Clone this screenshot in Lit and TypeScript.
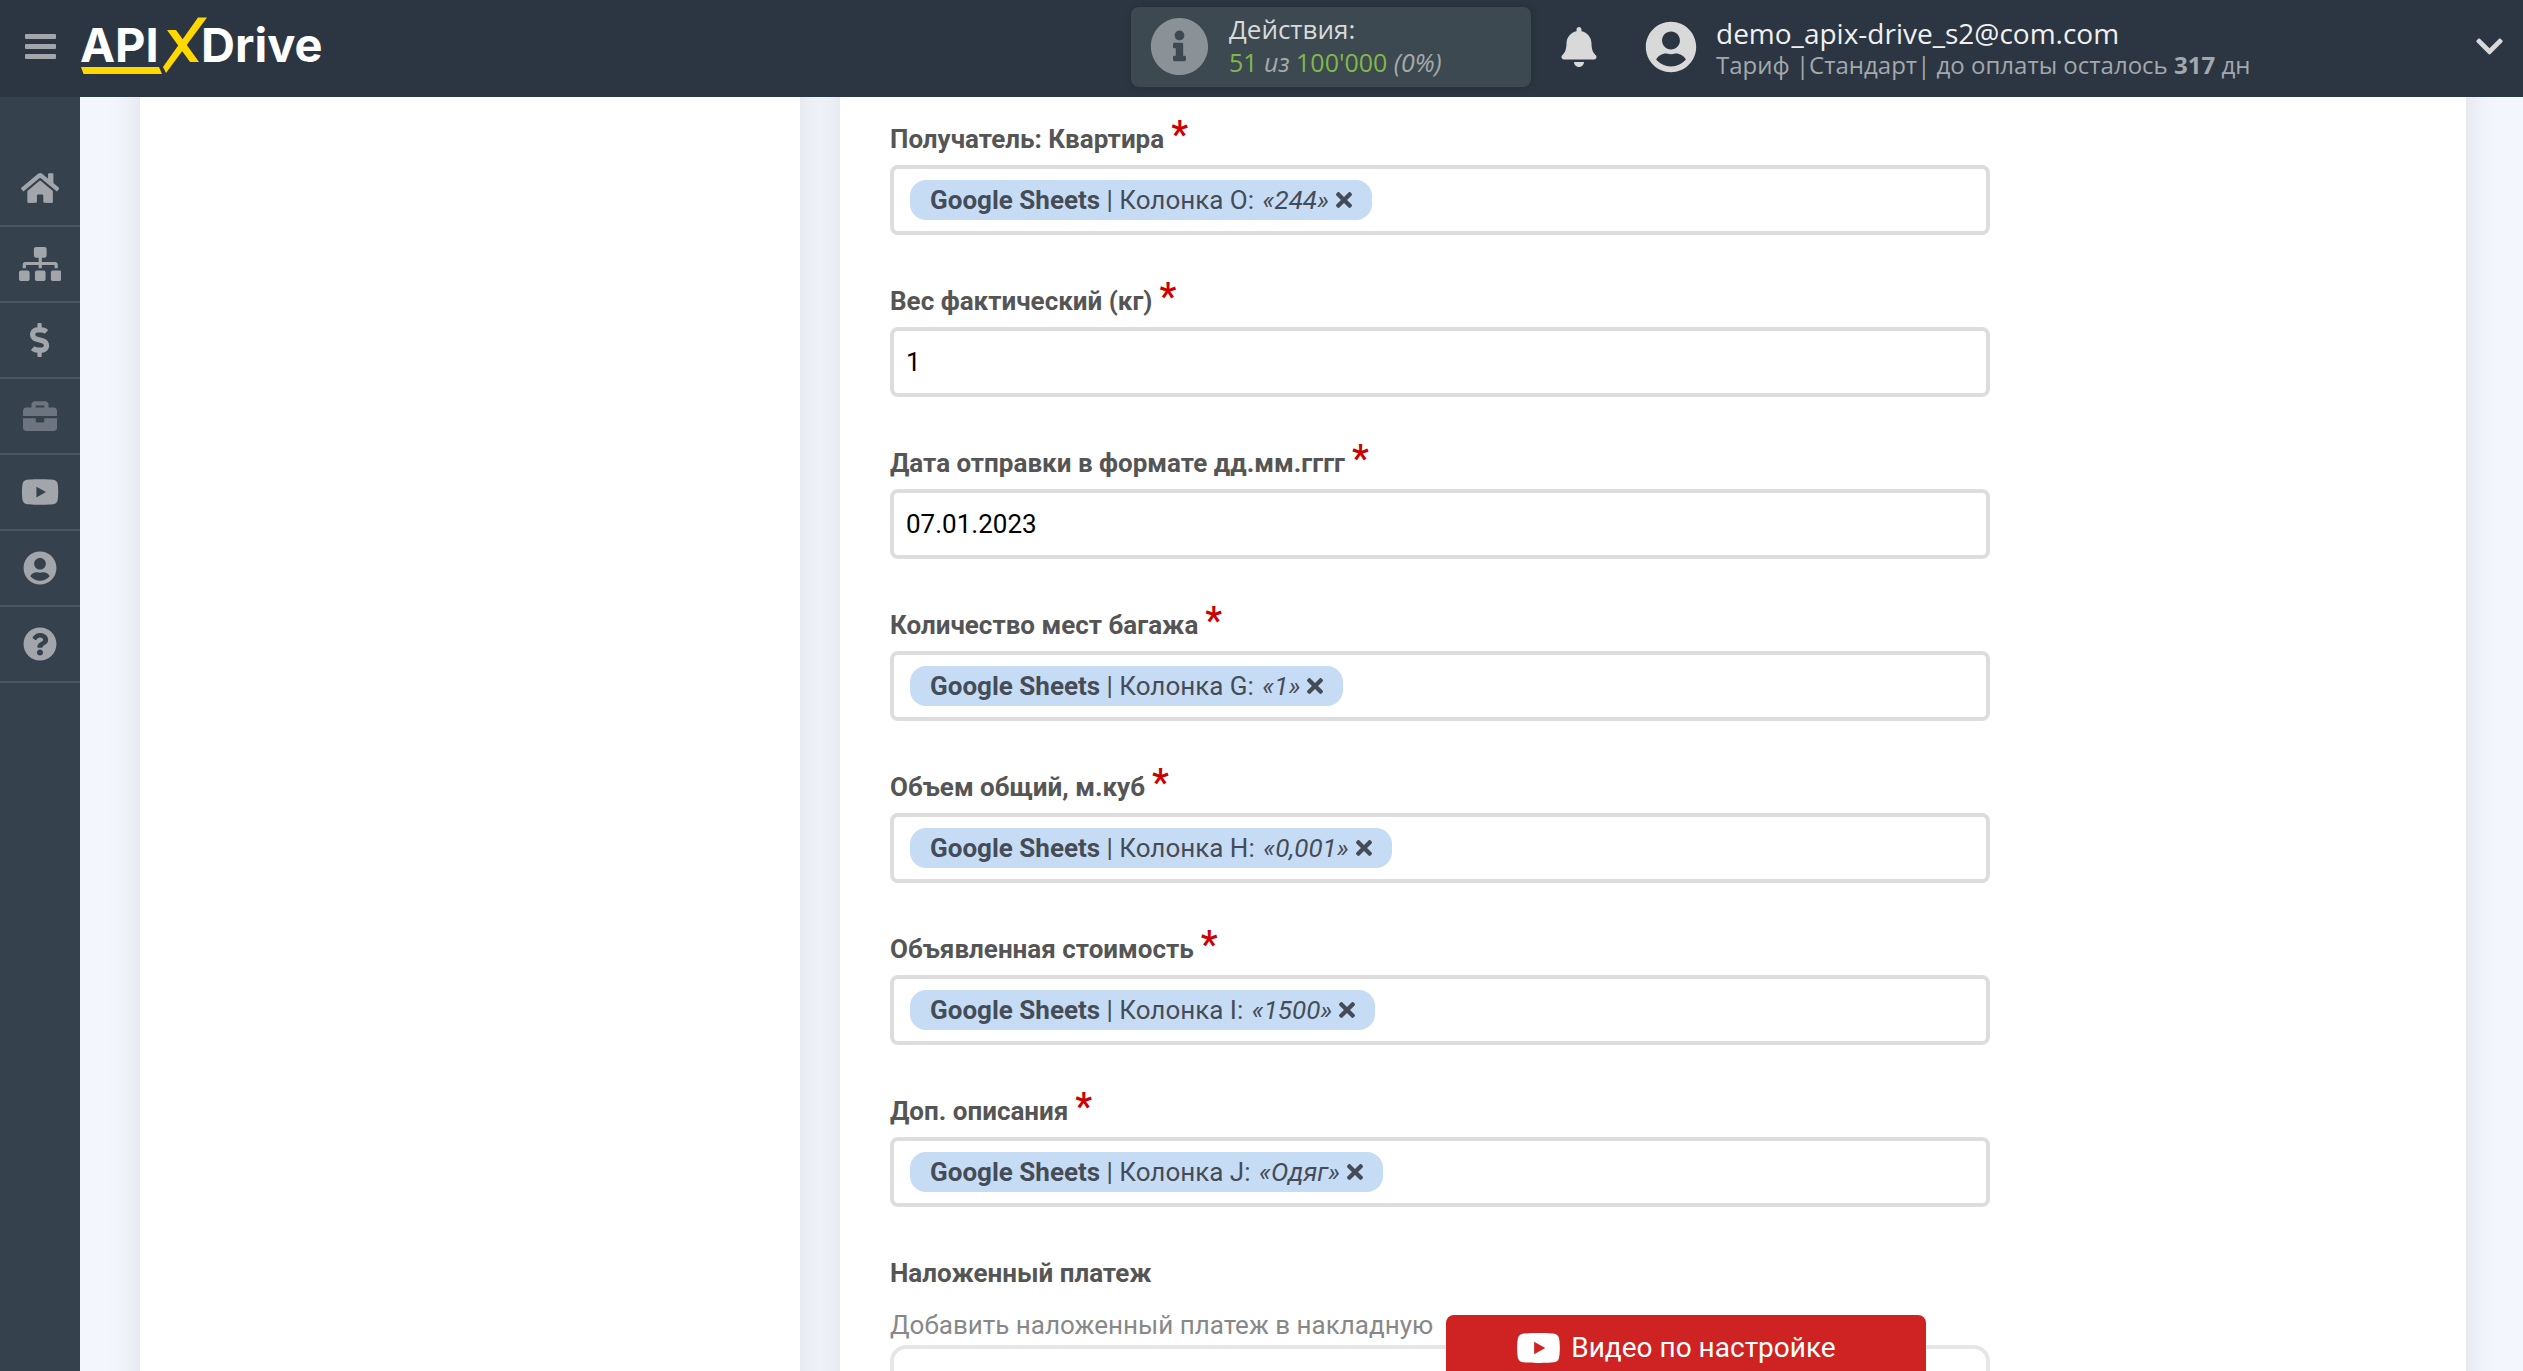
import { LitElement, html, svg, css, nothing } from "lit";
import { customElement, property } from "lit/decorators.js";

interface Glyph {
  box: string;
  d: string;
}

const glyphs: Record<string, Glyph> = {
  home: {
    box: "0 0 576 512",
    d: "M280.37 148.26L96 300.11V464a16 16 0 0 0 16 16l112.06-.29a16 16 0 0 0 15.92-16V368a16 16 0 0 1 16-16h64a16 16 0 0 1 16 16v95.64a16 16 0 0 0 16 16.05L464 480a16 16 0 0 0 16-16V300L295.67 148.26a12.19 12.19 0 0 0-15.3 0zM571.6 251.47L488 182.56V44.05a12 12 0 0 0-12-12h-56a12 12 0 0 0-12 12v72.61L318.47 43a48 48 0 0 0-61 0L4.34 251.47a12 12 0 0 0-1.6 16.9l25.5 31A12 12 0 0 0 45.15 301l235.22-193.74a12.19 12.19 0 0 1 15.3 0L530.9 301a12 12 0 0 0 16.9-1.6l25.5-31a12 12 0 0 0-1.7-16.93z",
  },
  sitemap: {
    box: "0 0 640 512",
    d: "M128 352H32c-17.67 0-32 14.33-32 32v96c0 17.67 14.33 32 32 32h96c17.67 0 32-14.33 32-32v-96c0-17.67-14.33-32-32-32zm-24-80h192v48h48v-48h192v48h48v-57.59c0-21.17-17.23-38.41-38.41-38.41H344v-64h40c17.67 0 32-14.33 32-32V32c0-17.67-14.33-32-32-32H256c-17.67 0-32 14.33-32 32v96c0 17.67 14.33 32 32 32h40v64H94.41C73.23 224 56 241.23 56 262.41V320h48v-48zm264 80h-96c-17.67 0-32 14.33-32 32v96c0 17.67 14.33 32 32 32h96c17.67 0 32-14.33 32-32v-96c0-17.67-14.33-32-32-32zm240 0h-96c-17.67 0-32 14.33-32 32v96c0 17.67 14.33 32 32 32h96c17.67 0 32-14.33 32-32v-96c0-17.67-14.33-32-32-32z",
  },
  dollar: {
    box: "0 0 288 512",
    d: "M209.2 233.4l-108-31.6C88.7 198.2 80 186.5 80 173.5c0-16.3 13.2-29.5 29.5-29.5h66.3c12.2 0 24.2 3.7 34.2 10.5 6.1 4.1 14.3 3.1 19.5-2l34.8-34c7.1-6.9 6.1-18.4-1.8-24.5C238 74.8 207.4 64.1 176 64V16c0-8.8-7.2-16-16-16h-32c-8.8 0-16 7.2-16 16v48h-2.5C45.8 64-5.4 118.7.5 183.6c4.2 46.1 39.4 83.6 83.8 96.6l102.5 30c12.5 3.7 21.2 15.3 21.2 28.3 0 16.3-13.2 29.5-29.5 29.5h-66.3C100 368 88 364.3 78 357.5c-6.1-4.1-14.3-3.1-19.5 2l-34.8 34c-7.1 6.9-6.1 18.4 1.8 24.5 24.5 19.2 55.1 29.9 86.5 30v48c0 8.8 7.2 16 16 16h32c8.8 0 16-7.2 16-16v-48.2c46.6-.9 90.3-28.6 105.7-72.7 21.5-61.6-14.6-124.8-72.5-141.7z",
  },
  briefcase: {
    box: "0 0 512 512",
    d: "M320 336c0 8.84-7.16 16-16 16h-96c-8.84 0-16-7.16-16-16v-48H0v144c0 25.6 22.4 48 48 48h416c25.6 0 48-22.4 48-48V288H320v48zm144-208h-80V80c0-25.6-22.4-48-48-48H176c-25.6 0-48 22.4-48 48v48H48c-25.6 0-48 22.4-48 48v80h512v-80c0-25.6-22.4-48-48-48zm-144 0H192V96h128v32z",
  },
  youtube: {
    box: "0 0 576 512",
    d: "M549.655 124.083c-6.281-23.65-24.787-42.276-48.284-48.597C458.781 64 288 64 288 64S117.22 64 74.629 75.486c-23.497 6.322-42.003 24.947-48.284 48.597-11.412 42.867-11.412 132.305-11.412 132.305s0 89.438 11.412 132.305c6.281 23.65 24.787 41.5 48.284 47.821C117.22 448 288 448 288 448s170.78 0 213.371-11.486c23.497-6.321 42.003-24.171 48.284-47.821 11.412-42.867 11.412-132.305 11.412-132.305s0-89.438-11.412-132.305zm-317.51 213.508V175.185l142.739 81.205-142.739 81.201z",
  },
  user: {
    box: "-8 0 512 512",
    d: "M248 8C111 8 0 119 0 256s111 248 248 248 248-111 248-248S385 8 248 8zm0 96c48.6 0 88 39.4 88 88s-39.4 88-88 88-88-39.4-88-88 39.4-88 88-88zm0 344c-58.7 0-111.3-26.6-146.5-68.2 18.8-35.4 55.6-59.8 98.5-59.8 2.4 0 4.8.4 7.1 1.1 13 4.2 26.6 6.9 40.9 6.9 14.3 0 28-2.7 40.9-6.9 2.3-.7 4.7-1.1 7.1-1.1 42.9 0 79.7 24.4 98.5 59.8C359.3 421.4 306.7 448 248 448z",
  },
  question: {
    box: "0 0 512 512",
    d: "M504 256c0 136.997-111.043 248-248 248S8 392.997 8 256C8 119.083 119.043 8 256 8s248 111.083 248 248zM262.655 90c-54.497 0-89.255 22.957-116.549 63.758-3.536 5.286-2.353 12.415 2.715 16.258l34.699 26.31c5.205 3.947 12.621 3.008 16.665-2.122 17.864-22.658 30.113-35.797 57.303-35.797 20.429 0 45.698 13.148 45.698 32.958 0 14.976-12.363 22.667-32.534 33.976C247.128 238.528 216 254.941 216 296v4c0 6.627 5.373 12 12 12h56c6.627 0 12-5.373 12-12v-1.333c0-28.462 83.186-29.647 83.186-106.667 0-58.002-60.165-102-116.531-102zM256 338c-25.365 0-46 20.635-46 46 0 25.364 20.635 46 46 46s46-20.636 46-46c0-25.365-20.635-46-46-46z",
  },
  info: {
    box: "0 0 512 512",
    d: "M256 8C119.043 8 8 119.083 8 256c0 136.997 111.043 248 248 248s248-111.003 248-248C504 119.083 392.957 8 256 8zm0 110c23.196 0 42 18.804 42 42s-18.804 42-42 42-42-18.804-42-42 18.804-42 42-42zm56 254c0 6.627-5.373 12-12 12h-88c-6.627 0-12-5.373-12-12v-24c0-6.627 5.373-12 12-12h12v-64h-12c-6.627 0-12-5.373-12-12v-24c0-6.627 5.373-12 12-12h64c6.627 0 12 5.373 12 12v100h12c6.627 0 12 5.373 12 12v24z",
  },
  bell: {
    box: "0 0 448 512",
    d: "M224 512c35.32 0 63.97-28.65 63.97-64H160.03c0 35.35 28.65 64 63.97 64zm215.39-149.71c-19.32-20.76-55.47-51.99-55.47-154.29 0-77.7-54.48-139.9-127.94-155.16V32c0-17.67-14.32-32-31.98-32s-31.98 14.33-31.98 32v20.84C118.56 68.1 64.08 130.3 64.08 208c0 102.3-36.15 133.53-55.47 154.29-6 6.45-8.66 14.16-8.61 21.71.11 16.4 12.98 32 32.1 32h383.8c19.12 0 32-15.6 32.1-32 .05-7.55-2.61-15.27-8.61-21.71z",
  },
  chevron: {
    box: "0 0 448 512",
    d: "M207.029 381.476L12.686 187.132c-9.373-9.373-9.373-24.569 0-33.941l22.667-22.667c9.357-9.357 24.522-9.375 33.901-.04L224 284.505l154.745-154.021c9.379-9.335 24.544-9.317 33.901.04l22.667 22.667c9.373 9.373 9.373 24.569 0 33.941L240.971 381.476c-9.373 9.372-24.569 9.372-33.942 0z",
  },
  times: {
    box: "0 80 352 352",
    d: "M242.72 256l100.07-100.07c12.28-12.28 12.28-32.19 0-44.48l-22.24-22.24c-12.28-12.28-32.19-12.28-44.48 0L176 189.28 75.93 89.21c-12.28-12.28-32.19-12.28-44.48 0L9.21 111.45c-12.28 12.28-12.28 32.19 0 44.48L109.28 256 9.21 356.07c-12.28 12.28-12.28 32.19 0 44.48l22.24 22.24c12.28 12.28 32.2 12.28 44.48 0L176 322.72l100.07 100.07c12.28 12.28 32.2 12.28 44.48 0l22.24-22.24c12.28-12.28 12.28-32.19 0-44.48L242.72 256z",
  },
};

const icon = (name: string, cls: string) => html`
  <svg class="icon ${cls}" viewBox=${glyphs[name].box} aria-hidden="true">${svg`<path d=${glyphs[name].d}></path>`}</svg>
`;

const reset = css`
  * {
    box-sizing: border-box;
  }
  button {
    margin: 0;
    padding: 0;
    border: 0;
    background: none;
    font: inherit;
    color: inherit;
    cursor: pointer;
  }
  a {
    color: inherit;
    text-decoration: none;
  }
  .icon {
    display: block;
    flex: none;
    fill: currentColor;
  }
`;

@customElement("top-bar")
class TopBar extends LitElement {
  static styles = [
    reset,
    css`
      :host {
        display: grid;
        grid-template-columns: 1131fr 1392fr;
        height: 97px;
        background: #2b3642;
        color: #d9d9d9;
        font-family: "Open Sans", "Noto Sans", sans-serif;
      }
      .brand,
      .account {
        display: flex;
        align-items: center;
        padding: 0 20px 4px 0;
      }
      .brand {
        padding-left: 25px;
        gap: 24px;
      }
      .menu {
        display: grid;
        gap: 5px;
      }
      .bar {
        width: 31px;
        height: 5px;
        border-radius: 1px;
        background: #a2a6aa;
      }
      .logo {
        display: block;
        width: 248px;
        height: 64px;
      }
      .word {
        font: 700 47px Inter, sans-serif;
        fill: #fff;
      }
      .mark {
        fill: #ffd800;
      }
      .usage {
        display: flex;
        align-items: center;
        gap: 20px;
        width: 400px;
        height: 80px;
        padding: 0 20px 0 19px;
        border-radius: 8px;
        background: #3c4950;
        box-shadow: 0 0 8px rgba(0, 0, 0, 0.15);
        font-size: 26px;
        line-height: 33px;
        text-align: left;
      }
      .info {
        width: 59px;
        height: 59px;
        color: #8a9197;
      }
      .lines {
        display: block;
        padding-bottom: 2px;
      }
      .line {
        display: block;
      }
      .count {
        font-size: 25px;
        line-height: 32px;
        color: #a6aaab;
      }
      .num {
        color: #82b74b;
      }
      .alerts {
        margin: 0 48px 0 30px;
      }
      .bell {
        width: 36px;
        height: 40px;
      }
      .profile {
        display: flex;
        align-items: center;
        flex: 1;
        gap: 19px;
        text-align: left;
      }
      .avatar {
        width: 52px;
        height: 52px;
      }
      .who {
        flex: 1;
        padding-top: 4px;
        font-size: 28px;
        line-height: 32px;
      }
      .mail {
        color: #f0f0f0;
      }
      .plan {
        font-size: 24px;
        color: #a3a8ad;
      }
      .chevron {
        width: 27px;
        height: 31px;
      }
    `,
  ];

  render() {
    return html`
      <div class="brand">
        <button class="menu" aria-label="Меню">
          <span class="bar"></span><span class="bar"></span><span class="bar"></span>
        </button>
        <a href="#" aria-label="APIXDrive">
          <svg class="logo" viewBox="80 14 248 64">
            <text class="word" x="80" y="61">API</text>
            <text class="word" x="201" y="61">Drive</text>
            <polygon class="mark" points="81,66 159,66 162,73 83.500,73"></polygon>
            <polygon class="mark" points="198,16.500 207,16.500 166,72 163,66"></polygon>
            <polygon class="mark" points="167,29 176,29 199,61 190,61"></polygon>
          </svg>
        </a>
      </div>
      <div class="account">
        <button class="usage">
          ${icon("info", "info")}
          <span class="lines">
            <span class="line">Действия:</span>
            <span class="line count"
              ><span class="num">51</span> <i>из</i> <span class="num">100'000</span> <i>(0%)</i></span
            >
          </span>
        </button>
        <button class="alerts" aria-label="Уведомления">${icon("bell", "bell")}</button>
        <button class="profile">
          ${icon("user", "avatar")}
          <span class="who">
            <span class="line mail">demo_apix-drive_s2@com.com</span>
            <span class="line plan">Тариф |Стандарт| до оплаты осталось <b>317</b> дн</span>
          </span>
          ${icon("chevron", "chevron")}
        </button>
      </div>
    `;
  }
}

@customElement("side-nav")
class SideNav extends LitElement {
  static styles = [
    reset,
    css`
      :host {
        display: block;
        padding-top: 54px;
        background: #36414e;
        color: #a2a6aa;
      }
      .item {
        display: grid;
        place-items: center;
        height: 76px;
        border-bottom: 2px solid #4a5562;
      }
      .glyph {
        height: 34px;
      }
      .muted {
        color: #6c757f;
      }
    `,
  ];

  private items = [
    ["home", "Главная"],
    ["sitemap", "Связи"],
    ["dollar", "Оплата"],
    ["briefcase", "Бизнес"],
    ["youtube", "Видео"],
    ["user", "Профиль"],
    ["question", "Помощь"],
  ];

  render() {
    return html`<nav>
      ${this.items.map(
        ([name, label]) => html`
          <a class="item ${name === "briefcase" ? "muted" : ""}" href="#" aria-label=${label}>
            ${icon(name, "glyph")}
          </a>
        `,
      )}
    </nav>`;
  }
}

@customElement("form-field")
class FormField extends LitElement {
  @property() label = "";
  @property() value = "";
  @property() column = "";
  @property() sample = "";

  static styles = [
    reset,
    css`
      :host {
        display: block;
        font-family: Roboto, sans-serif;
        font-size: 26px;
        line-height: 40px;
      }
      .label {
        display: flex;
        gap: 7px;
        height: 40px;
        margin-bottom: 6px;
        font-weight: 700;
        color: #555;
      }
      .star {
        font-size: 38px;
        line-height: 32px;
        font-weight: 500;
        color: #c00;
      }
      .box {
        display: flex;
        align-items: center;
        height: 70px;
        padding-left: 16px;
        border: 4px solid #ddd;
        border-radius: 8px;
        background: #fff;
      }
      .plain {
        padding-left: 0;
      }
      .input {
        flex: 1;
        min-width: 0;
        height: 100%;
        padding: 0 12px;
        border: 0;
        outline: 0;
        background: none;
        font: inherit;
        color: #000;
      }
      .tag {
        display: flex;
        align-items: center;
        gap: 7px;
        height: 40px;
        padding: 0 20px;
        border-radius: 16px;
        background: #c6dcf5;
        color: #454c57;
        white-space: nowrap;
      }
      .sample {
        margin-left: 2px;
      }
      .times {
        width: 16px;
        height: 16px;
      }
    `,
  ];

  render() {
    const tag = this.column
      ? html`<span class="tag">
          <span><b>Google Sheets</b> | Колонка ${this.column}: <i class="sample">«${this.sample}»</i></span>
          <button aria-label="Удалить">${icon("times", "times")}</button>
        </span>`
      : nothing;
    return html`
      <label class="label" for="field">${this.label}<span class="star">*</span></label>
      <div class="box ${this.column ? "" : "plain"}">
        ${tag}<input class="input" id="field" type="text" .value=${this.value} />
      </div>
    `;
  }
}

@customElement("app-root")
class AppRoot extends LitElement {
  static styles = [
    reset,
    css`
      :host {
        display: grid;
        grid-template-rows: auto minmax(0, 1fr);
        height: 100vh;
        overflow: hidden;
        background: #f3f7fd;
        font-family: Roboto, sans-serif;
        font-size: 26px;
        line-height: 40px;
      }
      .body {
        display: grid;
        grid-template-columns: 80px minmax(0, 1fr);
        overflow: hidden;
      }
      .content {
        display: grid;
        grid-template-columns: 660fr 1626fr;
        gap: 40px;
        padding: 0 57px 0 60px;
        overflow: hidden;
      }
      .panel {
        margin: -40px 0;
        padding: 40px 0;
        background: #fff;
        box-shadow: 0 0 32px rgba(0, 0, 0, 0.1);
      }
      .form {
        display: grid;
        align-content: start;
        gap: 46px;
        max-width: 1200px;
        padding: 22px 50px 0;
      }
      .caption {
        display: block;
        margin-bottom: 12px;
        font-weight: 700;
        color: #555;
      }
      .hint {
        display: block;
        color: #888;
      }
      .select {
        display: block;
        appearance: none;
        width: 100%;
        height: 70px;
        border: 4px solid #e6e6e8;
        border-radius: 16px;
        background: #fff;
        font: inherit;
      }
      .video {
        position: fixed;
        right: 597px;
        bottom: -10px;
        display: flex;
        align-items: center;
        justify-content: center;
        gap: 10px;
        width: 480px;
        height: 66px;
        padding-right: 20px;
        border-radius: 8px;
        background: #ce2322;
        color: #fff;
        font-size: 28px;
      }
      .play {
        height: 40px;
      }
    `,
  ];

  render() {
    return html`
      <top-bar></top-bar>
      <div class="body">
        <side-nav></side-nav>
        <main class="content">
          <section class="panel"></section>
          <section class="panel">
            <form class="form">
              <form-field label="Получатель: Квартира" column="O" sample="244"></form-field>
              <form-field label="Вес фактический (кг)" value="1"></form-field>
              <form-field label="Дата отправки в формате дд.мм.гггг" value="07.01.2023"></form-field>
              <form-field label="Количество мест багажа" column="G" sample="1"></form-field>
              <form-field label="Объем общий, м.куб" column="H" sample="0,001"></form-field>
              <form-field label="Объявленная стоимость" column="I" sample="1500"></form-field>
              <form-field label="Доп. описания" column="J" sample="Одяг"></form-field>
              <div>
                <label class="caption" for="cod">Наложенный платеж</label>
                <span class="hint">Добавить наложенный платеж в накладную</span>
                <select class="select" id="cod"></select>
              </div>
            </form>
          </section>
        </main>
      </div>
      <button class="video">${icon("youtube", "play")}Видео по настройке</button>
    `;
  }
}
